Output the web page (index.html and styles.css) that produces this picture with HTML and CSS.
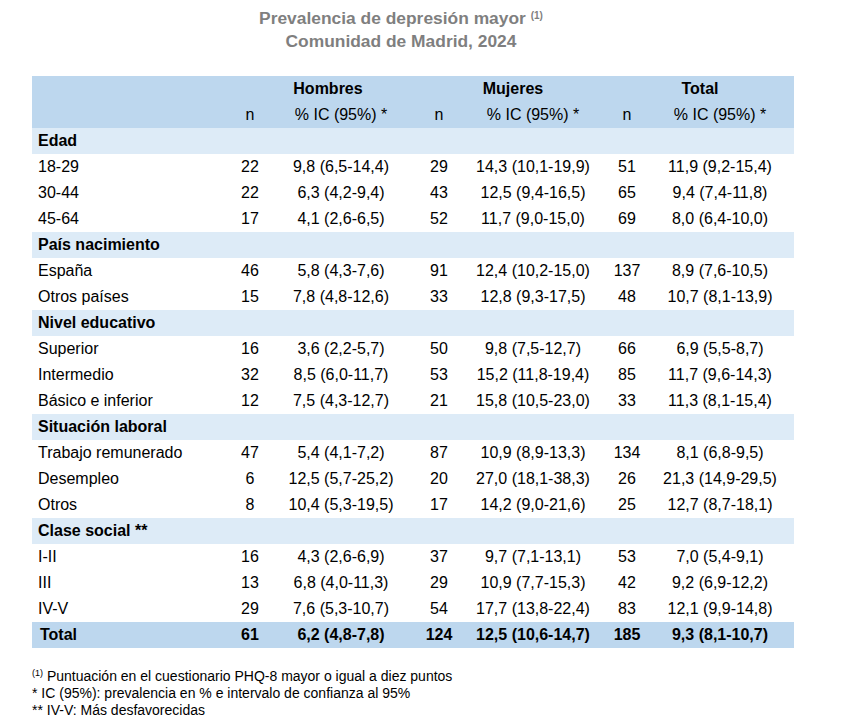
FILE: index.html
```html
<!DOCTYPE html>
<html lang="es">
<head>
<meta charset="utf-8">
<title>Prevalencia de depresión mayor</title>
<link rel="stylesheet" href="styles.css">
</head>
<body>
<div class="page">
  <h1 class="title">Prevalencia de depresión mayor <sup class="title-sup">(1)</sup><br>Comunidad de Madrid, 2024</h1>

  <div class="table">
    <div class="head">
      <div class="row">
        <span class="cell label"></span>
        <span class="cell"></span>
        <span class="cell hd-h">Hombres</span>
        <span class="cell"></span>
        <span class="cell hd-m">Mujeres</span>
        <span class="cell"></span>
        <span class="cell last hd-t">Total</span>
      </div>
      <div class="row">
        <span class="cell label"></span>
        <span class="cell">n</span>
        <span class="cell">% IC (95%) *</span>
        <span class="cell">n</span>
        <span class="cell">% IC (95%) *</span>
        <span class="cell">n</span>
        <span class="cell last">% IC (95%) *</span>
      </div>
    </div>

    <div class="row group"><span class="cell label">Edad</span></div>
    <div class="row"><span class="cell label">18-29</span><span class="cell">22</span><span class="cell">9,8 (6,5-14,4)</span><span class="cell">29</span><span class="cell">14,3 (10,1-19,9)</span><span class="cell">51</span><span class="cell last">11,9 (9,2-15,4)</span></div>
    <div class="row"><span class="cell label">30-44</span><span class="cell">22</span><span class="cell">6,3 (4,2-9,4)</span><span class="cell">43</span><span class="cell">12,5 (9,4-16,5)</span><span class="cell">65</span><span class="cell last">9,4 (7,4-11,8)</span></div>
    <div class="row"><span class="cell label">45-64</span><span class="cell">17</span><span class="cell">4,1 (2,6-6,5)</span><span class="cell">52</span><span class="cell">11,7 (9,0-15,0)</span><span class="cell">69</span><span class="cell last">8,0 (6,4-10,0)</span></div>

    <div class="row group"><span class="cell label">País nacimiento</span></div>
    <div class="row"><span class="cell label">España</span><span class="cell">46</span><span class="cell">5,8 (4,3-7,6)</span><span class="cell">91</span><span class="cell">12,4 (10,2-15,0)</span><span class="cell">137</span><span class="cell last">8,9 (7,6-10,5)</span></div>
    <div class="row"><span class="cell label">Otros países</span><span class="cell">15</span><span class="cell">7,8 (4,8-12,6)</span><span class="cell">33</span><span class="cell">12,8 (9,3-17,5)</span><span class="cell">48</span><span class="cell last">10,7 (8,1-13,9)</span></div>

    <div class="row group"><span class="cell label">Nivel educativo</span></div>
    <div class="row"><span class="cell label">Superior</span><span class="cell">16</span><span class="cell">3,6 (2,2-5,7)</span><span class="cell">50</span><span class="cell">9,8 (7,5-12,7)</span><span class="cell">66</span><span class="cell last">6,9 (5,5-8,7)</span></div>
    <div class="row"><span class="cell label">Intermedio</span><span class="cell">32</span><span class="cell">8,5 (6,0-11,7)</span><span class="cell">53</span><span class="cell">15,2 (11,8-19,4)</span><span class="cell">85</span><span class="cell last">11,7 (9,6-14,3)</span></div>
    <div class="row"><span class="cell label">Básico e inferior</span><span class="cell">12</span><span class="cell">7,5 (4,3-12,7)</span><span class="cell">21</span><span class="cell">15,8 (10,5-23,0)</span><span class="cell">33</span><span class="cell last">11,3 (8,1-15,4)</span></div>

    <div class="row group"><span class="cell label">Situación laboral</span></div>
    <div class="row"><span class="cell label">Trabajo remunerado</span><span class="cell">47</span><span class="cell">5,4 (4,1-7,2)</span><span class="cell">87</span><span class="cell">10,9 (8,9-13,3)</span><span class="cell">134</span><span class="cell last">8,1 (6,8-9,5)</span></div>
    <div class="row"><span class="cell label">Desempleo</span><span class="cell">6</span><span class="cell">12,5 (5,7-25,2)</span><span class="cell">20</span><span class="cell">27,0 (18,1-38,3)</span><span class="cell">26</span><span class="cell last">21,3 (14,9-29,5)</span></div>
    <div class="row"><span class="cell label">Otros</span><span class="cell">8</span><span class="cell">10,4 (5,3-19,5)</span><span class="cell">17</span><span class="cell">14,2 (9,0-21,6)</span><span class="cell">25</span><span class="cell last">12,7 (8,7-18,1)</span></div>

    <div class="row group"><span class="cell label">Clase social **</span></div>
    <div class="row"><span class="cell label">I-II</span><span class="cell">16</span><span class="cell">4,3 (2,6-6,9)</span><span class="cell">37</span><span class="cell">9,7 (7,1-13,1)</span><span class="cell">53</span><span class="cell last">7,0 (5,4-9,1)</span></div>
    <div class="row"><span class="cell label">III</span><span class="cell">13</span><span class="cell">6,8 (4,0-11,3)</span><span class="cell">29</span><span class="cell">10,9 (7,7-15,3)</span><span class="cell">42</span><span class="cell last">9,2 (6,9-12,2)</span></div>
    <div class="row"><span class="cell label">IV-V</span><span class="cell">29</span><span class="cell">7,6 (5,3-10,7)</span><span class="cell">54</span><span class="cell">17,7 (13,8-22,4)</span><span class="cell">83</span><span class="cell last">12,1 (9,9-14,8)</span></div>

    <div class="row total"><span class="cell label">Total</span><span class="cell">61</span><span class="cell">6,2 (4,8-7,8)</span><span class="cell">124</span><span class="cell">12,5 (10,6-14,7)</span><span class="cell">185</span><span class="cell last">9,3 (8,1-10,7)</span></div>
  </div>

  <div class="notes">
    <p><sup class="note-sup">(1)</sup> Puntuación en el cuestionario PHQ-8 mayor o igual a diez puntos</p>
    <p>* IC (95%): prevalencia en % e intervalo de confianza al 95%</p>
    <p>** IV-V: Más desfavorecidas</p>
  </div>
</div>
</body>
</html>
```

FILE: styles.css
```css
body {
  margin: 0;
  background: #ffffff;
  color: #000000;
  font-family: "Liberation Sans", Arial, sans-serif;
}

.page {
  padding: 7px 0 0 32px;
  width: 762px;
}

.title {
  margin: 0;
  width: 738px;
  font-size: 17.4px;
  line-height: 23px;
  font-weight: bold;
  color: #7f7f7f;
  text-align: center;
}

.title-sup {
  font-size: 10px;
  line-height: 0;
  vertical-align: 5px;
}

.table {
  margin-top: 23px;
  font-size: 16px;
}

.row {
  display: grid;
  grid-template-columns: 188px 60px 122px 74px 114px 74px 130px;
  height: 26px;
  align-items: center;
}

.cell {
  display: flex;
  justify-content: center;
  white-space: nowrap;
  line-height: 26px;
}

.cell.last {
  padding-right: 18px;
}

.cell.label {
  justify-content: flex-start;
  padding-left: 6px;
}

.head {
  background: #bdd7ee;
}

.hd-h {
  font-weight: bold;
  padding-right: 26px;
}

.hd-m {
  font-weight: bold;
  padding-right: 40px;
}

.cell.hd-t {
  font-weight: bold;
  padding-right: 58px;
}

.group {
  background: #ddebf7;
  font-weight: bold;
}

.total {
  background: #bdd7ee;
  font-weight: bold;
}

.total .cell.label {
  padding-left: 8px;
}

.notes {
  margin-top: 20px;
  font-size: 14px;
  line-height: 17px;
}

.notes p {
  margin: 0;
}

.note-sup {
  font-size: 9px;
  line-height: 0;
  vertical-align: 5px;
}
```
